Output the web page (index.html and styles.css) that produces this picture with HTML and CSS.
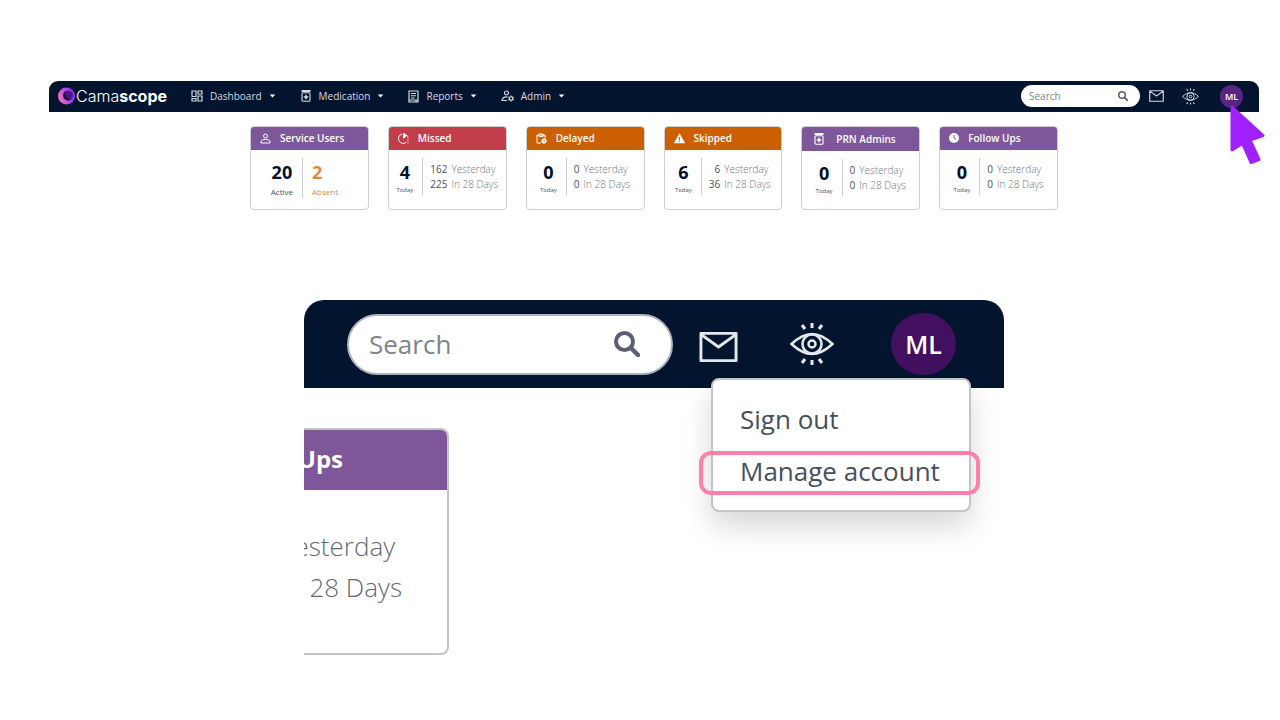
FILE: index.html
```html
<!DOCTYPE html>
<html lang="en">
<head>
  <meta charset="UTF-8" />
  <meta name="viewport" content="width=device-width, initial-scale=1.0" />
  <title>Camascope - Manage account</title>
  <link rel="stylesheet" href="styles.css">
</head>
<body>
  <!-- shared icons -->
  <svg class="sprite" aria-hidden="true">
    <symbol id="i-mail" viewBox="0 0 40 32">
      <path d="M2 2h36v28H2zM2 3l18 13L38 3" fill="none" stroke="currentColor" stroke-width="3" stroke-linejoin="round" />
    </symbol>
    <symbol id="i-eye" viewBox="0 0 44 44">
      <g fill="none" stroke="currentColor" stroke-width="2.500">
        <path d="M1.500 22C8 16 15 12 22 12S36 16 42.500 22C36 28 29 32 22 32S8 28 1.500 22z" />
        <circle cx="22" cy="22" r="9.500" />
        <circle cx="22" cy="22" r="3.500" />
        <path d="M22 1v5M12 3l3 4M32 3l-3 4M22 38v5M12 41l3-4M32 41l-3-4" stroke-width="3" />
      </g>
    </symbol>
    <symbol id="i-search" viewBox="0 0 26 26">
      <circle cx="10.500" cy="10.500" r="8.500" fill="none" stroke="currentColor" stroke-width="4" />
      <path d="M17 17l7 7" stroke="currentColor" stroke-width="4.500" stroke-linecap="round" />
    </symbol>
    <symbol id="i-bottle" viewBox="0 0 20 24">
      <path d="M1 0h18v4H1z" fill="currentColor" />
      <rect x="2" y="5.500" width="16" height="17" rx="2" fill="none" stroke="currentColor" stroke-width="2.200" />
      <path d="M10 9.500v9M5.500 14h9" stroke="currentColor" stroke-width="3" />
    </symbol>
    <symbol id="i-caret" viewBox="0 0 8 5">
      <path d="M.5.500h7L4 4.500z" fill="currentColor" />
    </symbol>
  </svg>

  <header class="navbar">
    <a class="logo" href="#">
      <svg class="logo-mark" viewBox="0 0 34 36">
        <defs>
          <linearGradient id="ring" x1="0" y1=".6" x2="1" y2=".3">
            <stop offset="0" stop-color="#f778b4" />
            <stop offset=".5" stop-color="#b549e8" />
            <stop offset="1" stop-color="#8b2be8" />
          </linearGradient>
        </defs>
        <circle cx="17" cy="18" r="17" fill="url(#ring)" />
        <circle cx="20" cy="17" r="10" fill="#4a1690" />
        <path d="M15 8.500a10 10 0 1 0 12 16A12 12 0 0 1 15 8.500z" fill="#160f3d" />
      </svg>
      <span>Cama<b>scope</b></span>
    </a>
    <nav class="menu">
      <button class="menu-item">
        <svg width="12" height="12" viewBox="0 0 24 24" fill="none" stroke="currentColor" stroke-width="2.400"><path d="M2 2h8v11H2zM14 2h8v6h-8zM2 17h8v5H2zM14 12h8v10h-8z" /></svg>
        Dashboard
        <svg class="caret"><use href="#i-caret" /></svg>
      </button>
      <button class="menu-item">
        <svg width="12" height="12"><use href="#i-bottle" /></svg>
        Medication
        <svg class="caret"><use href="#i-caret" /></svg>
      </button>
      <button class="menu-item">
        <svg width="11" height="13" viewBox="0 0 22 26" fill="none" stroke="currentColor" stroke-width="2.400"><path d="M2 2h18v22H2zM6 7h10M6 11.500h10M6 16h7M2 20h14v4M16 20h4" /></svg>
        Reports
        <svg class="caret"><use href="#i-caret" /></svg>
      </button>
      <button class="menu-item">
        <svg width="13" height="12" viewBox="0 0 26 24" fill="none" stroke="currentColor" stroke-width="2.400"><circle cx="11" cy="6" r="4" /><path d="M13 14C7 13 2 16 2 21h10" /><circle cx="20" cy="17" r="3.500" /><path d="M20 11v2.500M20 20.500V23M14.800 14l2.200 1.200M23 18.800l2.200 1.200M14.800 20l2.200-1.200M23 15.200l2.200-1.200" /></svg>
        Admin
        <svg class="caret"><use href="#i-caret" /></svg>
      </button>
    </nav>
    <div class="tools">
      <label class="search">
        <input type="search" placeholder="Search" aria-label="Search" />
        <svg><use href="#i-search" /></svg>
      </label>
      <button class="icon-btn mail" aria-label="Messages"><svg><use href="#i-mail" /></svg></button>
      <button class="icon-btn eye" aria-label="View"><svg><use href="#i-eye" /></svg></button>
      <div class="account">
        <button class="avatar">ML</button>
        <svg class="pointer" viewBox="0 0 36 62"><path d="M3 3L34 31.500 21 36 30 55.500 22 58.500 13.500 39.500 3 46z" fill="#a020ff" stroke="#a020ff" stroke-width="3" stroke-linejoin="round" /></svg>
      </div>
    </div>
  </header>

  <main>
    <section class="cards">
      <article class="card purple">
        <h2><svg width="11" height="11" viewBox="0 0 22 22" fill="none" stroke="currentColor" stroke-width="2"><circle cx="11" cy="6" r="4" /><path d="M2 20v-3c0-3 4-4 9-4s9 1 9 4v3z" /></svg>Service Users</h2>
        <div class="card-body people">
          <div class="count"><strong>20</strong><span>Active</span></div>
          <div class="count absent"><strong>2</strong><span>Absent</span></div>
        </div>
      </article>
      <article class="card red">
        <h2><svg width="11" height="11" viewBox="0 0 22 22" fill="none" stroke="currentColor" stroke-width="2"><path d="M8 2a9.500 9.500 0 1 0 9 16M17 4a9 9 0 0 1 3 6M20 13v3M20 19v2" /><path d="M11 1v10l6-6a9 9 0 0 0-6-4z" fill="currentColor" /></svg>Missed</h2>
        <div class="card-body">
          <div class="count"><strong>4</strong><span>Today</span></div>
          <dl><dt>162</dt><dd>Yesterday</dd><dt>225</dt><dd>In 28 Days</dd></dl>
        </div>
      </article>
      <article class="card orange">
        <h2><svg width="11" height="11" viewBox="0 0 22 22" fill="none" stroke="currentColor" stroke-width="2"><path d="M10 20H2V4h16v6M6 2v5h8V2z" /><circle cx="16" cy="16" r="4.500" fill="currentColor" /><path d="M16 13v3h2" stroke="#cc6000" stroke-width="1.500" /></svg>Delayed</h2>
        <div class="card-body">
          <div class="count"><strong>0</strong><span>Today</span></div>
          <dl><dt>0</dt><dd>Yesterday</dd><dt>0</dt><dd>In 28 Days</dd></dl>
        </div>
      </article>
      <article class="card orange">
        <h2><svg width="11" height="11" viewBox="0 0 22 22"><path d="M11 1.500L21.500 20H.5z" fill="currentColor" stroke="currentColor" stroke-linejoin="round" /><path d="M11 8v6M11 15.500v2.500" stroke="#cc6000" stroke-width="2.500" /></svg>Skipped</h2>
        <div class="card-body">
          <div class="count"><strong>6</strong><span>Today</span></div>
          <dl><dt>6</dt><dd>Yesterday</dd><dt>36</dt><dd>In 28 Days</dd></dl>
        </div>
      </article>
      <article class="card purple prn">
        <h2><svg width="10" height="12"><use href="#i-bottle" /></svg>PRN Admins</h2>
        <div class="card-body">
          <div class="count"><strong>0</strong><span>Today</span></div>
          <dl><dt>0</dt><dd>Yesterday</dd><dt>0</dt><dd>In 28 Days</dd></dl>
        </div>
      </article>
      <article class="card purple">
        <h2><svg width="10" height="10" viewBox="0 0 20 20"><circle cx="10" cy="10" r="10" fill="currentColor" /><path d="M10 4v6l4 3" fill="none" stroke="#7d5799" stroke-width="2" /></svg>Follow Ups</h2>
        <div class="card-body">
          <div class="count"><strong>0</strong><span>Today</span></div>
          <dl><dt>0</dt><dd>Yesterday</dd><dt>0</dt><dd>In 28 Days</dd></dl>
        </div>
      </article>
    </section>

    <!-- close-up of the account menu -->
    <section class="closeup">
      <div class="closeup-bar">
        <label class="search">
          <input type="search" placeholder="Search" aria-label="Search" />
          <svg><use href="#i-search" /></svg>
        </label>
        <button class="icon-btn mail" aria-label="Messages"><svg><use href="#i-mail" /></svg></button>
        <button class="icon-btn eye" aria-label="View"><svg><use href="#i-eye" /></svg></button>
        <div class="account">
          <button class="avatar">ML</button>
          <div class="dropdown">
            <a href="#">Sign out</a>
            <a class="marked" href="#">Manage account</a>
          </div>
        </div>
      </div>
      <article class="closeup-card">
        <h2>Ups</h2>
        <div class="closeup-lines">
          <p>Yesterday<br>In 28 Days</p>
        </div>
      </article>
    </section>
  </main>
</body>
</html>
```

FILE: styles.css
```css
* { box-sizing: border-box; }
body { margin: 0; padding: 81px 21px 0 49px; background: white; font-family: "Open Sans", sans-serif; font-size: 10px; color: #44505c; }
h2, p, dl, dd { margin: 0; }
button { padding: 0; border: none; background: none; color: inherit; font: inherit; cursor: pointer; }
a { color: inherit; text-decoration: none; }
svg { display: block; flex: none; }
.sprite { position: absolute; width: 0; height: 0; }

/* top bar */
.navbar { display: flex; align-items: center; height: 31px; padding: 0 16px 1px 9px; background: #03142f; border-radius: 9px 9px 0 0; color: #d5dae1; }
.logo { display: flex; align-items: center; gap: 1px; color: white; font: 300 16px/20px Inter, sans-serif; }
.logo b { font-weight: 700; }
.logo-mark { width: 17px; height: 18px; }
.menu { display: flex; gap: 24px; margin-left: 24px; }
.menu-item { display: flex; align-items: center; gap: 7px; line-height: 14px; }
.caret { width: 7px; height: 4px; color: white; }
.tools { display: flex; align-items: center; margin-left: auto; }
.search { display: flex; align-items: center; width: 119px; height: 22px; padding: 0 12px 0 8px; background: white; border-radius: 11px; color: #5a6070; }
.search input { flex: 1; min-width: 0; padding: 0; border: none; outline: none; background: none; font: inherit; color: inherit; }
.search input::placeholder { color: #7d858c; }
.search svg { width: 10px; height: 10px; }
.mail { margin-left: 9px; }
.mail svg { width: 15px; height: 12px; }
.eye { margin-left: 18px; }
.eye svg { width: 17px; height: 17px; }
.account { position: relative; margin-left: 21px; }
.avatar { display: block; width: 23px; height: 23px; border-radius: 50%; background: #5a2483; color: white; font-weight: 600; font-size: 9px; }
.pointer { position: absolute; left: 9px; top: 19px; width: 36px; height: 62px; z-index: 1; }

/* summary cards */
.cards { display: grid; grid-template-columns: repeat(6, 1fr); gap: 19px; max-width: 808px; margin: 14px auto 0; }
.card { min-height: 84px; border: 1px solid #cfcfd1; border-radius: 4px; overflow: hidden; }
.card h2 { display: flex; align-items: center; gap: 9px; height: 23px; padding: 0 0 1px 9px; color: white; font-size: 10px; line-height: 14px; font-weight: 600; }
.purple h2 { background: #7d5799; }
.red h2 { background: #c23e4b; }
.orange h2 { background: #cc6000; }
.card.prn h2 { height: 24px; gap: 12px; padding-left: 12px; }
.card-body { display: flex; justify-content: center; padding-top: 8px; }
.count { display: flex; flex-direction: column; align-items: center; padding-right: 9px; }
.count strong { color: #03102b; font-size: 18px; line-height: 28px; font-weight: 700; }
.count span { font-size: 6px; line-height: 9px; }
.card dl { display: grid; grid-template-columns: auto auto; align-content: start; column-gap: 4px; height: 37px; padding: 4px 0 0 7px; border-left: 1px solid #cfcfd1; line-height: 15px; }
.card dt { text-align: right; }
.card dd { color: #6d767e; font-weight: 300; }
.people { padding-right: 10px; }
.people .count span { font-size: 8px; line-height: 12px; }
.people .absent { align-items: flex-start; padding: 0 0 0 9px; border-left: 1px solid #cfcfd1; }
.people .absent strong, .people .absent span { color: #dd8a35; }

/* close-up */
.closeup { max-width: 700px; margin: 90px auto 0; font-size: 26px; }
.closeup-bar { display: flex; align-items: center; height: 88px; padding: 0 48px 0 43px; background: #03142f; border-radius: 20px 20px 0 0; color: #e3e7ec; }
.closeup .search { flex: 1; height: 61px; padding: 0 31px 0 20px; border: 2px solid #aeb3bd; border-radius: 31px; }
.closeup .search svg { width: 26px; height: 26px; }
.closeup .mail { margin: 5px 0 0 26px; }
.closeup .mail svg { width: 39px; height: 32px; }
.closeup .eye { margin-left: 52px; }
.closeup .eye svg { width: 44px; height: 44px; }
.closeup .account { margin-left: 57px; }
.closeup .avatar { width: 65px; height: 62px; background: #43105f; font-size: 25px; }
.dropdown { position: absolute; top: 65px; right: -15px; width: 260px; padding: 13px 27px; background: white; border: 2px solid #c3c4c8; border-radius: 8px; box-shadow: 0 14px 30px rgba(0,0,0,0.16); color: #44505c; line-height: 52px; white-space: nowrap; }
.dropdown a { display: block; }
.marked { position: relative; }
.marked::after { content: ""; position: absolute; inset: 6px -38px 2px -41px; border: 4px solid #ff7fab; border-radius: 12px; }
.closeup-card { width: 145px; height: 227px; margin-top: 40px; border: 2px solid #c3c4c8; border-left: none; border-radius: 0 8px 8px 0; overflow: hidden; }
.closeup-card h2 { display: flex; justify-content: flex-end; height: 60px; padding-right: 104px; background: #7d5799; color: white; font-size: 24px; line-height: 58px; font-weight: 700; }
.closeup-lines { display: flex; justify-content: flex-end; padding: 36px 45px 0 0; }
.closeup-lines p { color: #5f6b75; font-size: 26px; line-height: 41px; font-weight: 300; white-space: nowrap; }
```
